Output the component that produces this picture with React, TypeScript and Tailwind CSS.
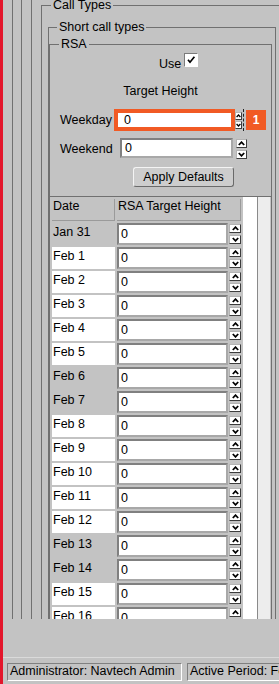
import React from 'react';

const FEB_WEEKENDS = [6, 7, 13, 14];

const ROWS = [
    { date: 'Jan 31', weekend: true },
    ...Array.from({ length: 16 }, (_, i) => ({ date: `Feb ${i + 1}`, weekend: FEB_WEEKENDS.includes(i + 1) })),
];

const Chevron: React.FC<{ down?: boolean; small?: boolean }> = ({ down, small }) =>
    small ? (
        <svg width="5" height="4" viewBox="0 0 5 4" className="block">
            <path d={down ? 'M0.6 1L2.5 3L4.4 1' : 'M0.6 3L2.5 1L4.4 3'} fill="none" stroke="#000" strokeWidth="1.3" />
        </svg>
    ) : (
        <svg width="7" height="5" viewBox="0 0 7 5" className="block">
            <path d={down ? 'M0.8 1L3.5 3.8L6.2 1' : 'M0.8 4L3.5 1.2L6.2 4'} fill="none" stroke="#000" strokeWidth="1.8" />
        </svg>
    );

const SpinBtn: React.FC<{ down?: boolean; small?: boolean; className?: string }> = ({ down, small, className }) => (
    <div className={`flex items-center justify-center bg-white border border-t-[#b4b4b4] border-l-[#b4b4b4] border-r-[#3c3c3c] border-b-[#3c3c3c] ${className ?? ''}`}>
        <Chevron down={down} small={small} />
    </div>
);

const App: React.FC = () => {
    return (
        <div className="flex h-[684px] w-[279px] overflow-hidden bg-[#c3c3c3] font-['Liberation_Sans',Arial,sans-serif] text-[12.5px] text-black">
            <div className="w-[3px] shrink-0 bg-[#e3162b]" />

            <div className="flex min-w-0 flex-1 flex-col">
                <div className="h-[619px] overflow-hidden">
                    <div className="ml-[9px] w-[330px] border-l border-[#707070] pl-[8px]">
                        <div className="border-l border-[#707070] pl-[9px]">
                            <div className="border-l border-[#707070] pl-[9px]">
                                <fieldset className="-mt-[2px] border border-[#707070] pl-[6px] pr-[8px] pt-[8px]">
                                    <legend className="ml-[3px] px-[2px] leading-[14px]">Call Types</legend>

                                    <fieldset className="w-[228px] border border-[#707070] pr-[3px] pt-[3px]">
                                        <legend className="ml-[8px] px-[2px] leading-[14px]">Short call types</legend>

                                        <fieldset className="w-[223px] border border-[#707070]">
                                            <legend className="ml-[9px] px-[2px] leading-[14px]">RSA</legend>

                                            <div className="mt-[2px] flex pl-[109px]">
                                                <span className="mt-[4px] leading-[14px]">Use</span>
                                                <div className="ml-[3px] flex h-[14px] w-[14px] items-center justify-center border border-t-[#7a7a7a] border-l-[#7a7a7a] border-r-white border-b-white bg-white">
                                                    <svg width="12" height="12" viewBox="0 0 12 12">
                                                        <path d="M3 5.8L5 8.2L9.4 2.8" fill="none" stroke="#000" strokeWidth="1.7" />
                                                    </svg>
                                                </div>
                                            </div>

                                            <div className="mt-[13px] text-center leading-[14px]">Target Height</div>

                                            <div className="mt-[11px] flex items-center pl-[10px]">
                                                <span className="w-[54px] leading-[14px]">Weekday</span>
                                                <div className="flex h-[22px] w-[121px] items-center border-[4px] border-[#f15a24] bg-white pl-[6px] leading-[14px]">0</div>
                                                <div className="flex h-[22px] w-[7px] flex-col justify-center gap-[1px]">
                                                    <SpinBtn small className="h-[8px] w-[7px]" />
                                                    <SpinBtn small down className="h-[8px] w-[7px]" />
                                                </div>
                                                <div className="ml-[1px] h-[22px] border-l border-dashed border-[#202020]" />
                                                <div className="ml-[2px] flex h-[20px] w-[20px] items-center justify-center bg-[#f15a24] text-[12px] font-bold text-white">1</div>
                                            </div>

                                            <div className="mt-[7px] flex items-start pl-[10px]">
                                                <span className="mt-[4px] w-[60px] leading-[14px]">Weekend</span>
                                                <div className="flex h-[20px] w-[113px] items-center border-2 border-t-[#808080] border-l-[#808080] border-r-[#a8a8a8] border-b-[#a8a8a8] bg-white pl-[3px] leading-[14px]">0</div>
                                                <div className="ml-[3px] mt-[1px] flex flex-col gap-[2px]">
                                                    <SpinBtn className="h-[9px] w-[11px]" />
                                                    <SpinBtn down className="h-[9px] w-[11px]" />
                                                </div>
                                            </div>

                                            <button className="ml-[83px] mt-[8px] flex h-[20px] w-[101px] items-center justify-center rounded-[3px] border border-t-[#f4f4f4] border-l-[#f4f4f4] border-r-[#6a6a6a] border-b-[#6a6a6a] bg-[#cdcdcd] leading-[14px]">
                                                Apply Defaults
                                            </button>

                                            <div className="mt-[9px] flex border-t border-[#707070]">
                                                <div className="w-[208px] border-r border-[#8a8a8a] bg-white">
                                                    <table className="border-separate border-spacing-[2px] bg-[#c3c3c3]">
                                                        <thead>
                                                            <tr>
                                                                <th className="h-[22px] w-[63px] border-r border-b border-[#9a9a9a] pl-[1px] text-left align-top font-normal leading-[14px]">Date</th>
                                                                <th className="h-[22px] w-[124px] border-r border-b border-[#9a9a9a] pl-[1px] text-left align-top font-normal leading-[14px] whitespace-nowrap">RSA Target Height</th>
                                                            </tr>
                                                        </thead>
                                                        <tbody>
                                                            {ROWS.map((row) => (
                                                                <tr key={row.date}>
                                                                    <td className={`h-[22px] w-[63px] pl-[1px] pt-[2px] align-top leading-[14px] ${row.weekend ? 'bg-[#c3c3c3]' : 'bg-white'}`}>
                                                                        {row.date}
                                                                    </td>
                                                                    <td className="h-[22px] w-[124px] p-0">
                                                                        <div className="flex">
                                                                            <div className="flex h-[22px] w-[111px] items-center border-2 border-t-[#808080] border-l-[#808080] border-r-[#a8a8a8] border-b-[#a8a8a8] bg-white pl-[2px] leading-[14px]">0</div>
                                                                            <div className="ml-[1px] flex h-[22px] flex-col justify-between py-[1px]">
                                                                                <SpinBtn className="h-[9px] w-[12px]" />
                                                                                <SpinBtn down className="h-[9px] w-[12px]" />
                                                                            </div>
                                                                        </div>
                                                                    </td>
                                                                </tr>
                                                            ))}
                                                        </tbody>
                                                    </table>
                                                </div>
                                                <div className="w-[12px] bg-[#ededed]" />
                                            </div>
                                        </fieldset>
                                    </fieldset>
                                </fieldset>
                            </div>
                        </div>
                    </div>
                </div>

                <div className="mt-auto flex h-[27px] gap-[5px] border-t border-[#dadada] pl-[4px] pt-[5px] text-[12.5px]">
                    <div className="h-[18px] w-[175px] shrink-0 overflow-hidden whitespace-nowrap border border-t-[#808080] border-l-[#808080] border-r-white border-b-white pl-[2px] leading-[15px]">Administrator: Navtech Admin</div>
                    <div className="h-[18px] w-[200px] shrink-0 overflow-hidden whitespace-nowrap border border-t-[#808080] border-l-[#808080] border-r-white border-b-white pl-[2px] leading-[15px]">Active Period: Feb 2021</div>
                </div>
            </div>
        </div>
    );
};

export default App;
